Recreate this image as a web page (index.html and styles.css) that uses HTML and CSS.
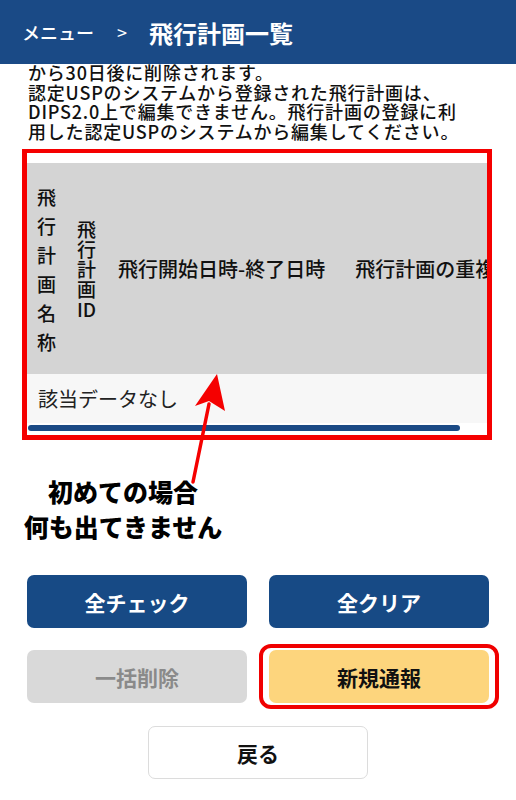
FILE: index.html
```html
<!DOCTYPE html>
<html lang="ja">
<head>
<meta charset="utf-8">
<link rel="stylesheet" href="styles.css">
</head>
<body>
<header class="topbar">
  <span class="crumb">メニュー</span>
  <span class="sep">&gt;</span>
  <span class="title">飛行計画一覧</span>
</header>
<div class="notice">から30日後に削除されます。<br>認定USPのシステムから登録された飛行計画は、<br>DIPS2.0上で編集できません。飛行計画の登録に利<br>用した認定USPのシステムから編集してください。</div>

<div class="tablebox">
  <div class="table">
    <div class="thead">
      <div class="th th-name">飛行計画名称</div>
      <div class="th th-id">飛行計画ID</div>
      <div class="th th-date">飛行開始日時-終了日時</div>
      <div class="th th-dup">飛行計画の重複</div>
    </div>
    <div class="row">該当データなし</div>
    <div class="scrolltrack"><div class="scrollbar"></div></div>
  </div>
</div>

<div class="annotation">初めての場合<br>何も出てきません</div>

<div class="buttons">
  <button class="btn btn-primary">全チェック</button>
  <button class="btn btn-primary">全クリア</button>
  <button class="btn btn-disabled">一括削除</button>
  <button class="btn btn-new">新規通報</button>
</div>
<div class="back-wrap">
  <button class="btn btn-back">戻る</button>
</div>

<svg class="arrow" width="516" height="800" viewBox="0 0 516 800">
  <line x1="209" y1="404" x2="193" y2="482" stroke="#f50000" stroke-width="3.5" stroke-linecap="round"/>
  <polygon points="217,374 195,406 209,401 225,411" fill="#f50000"/>
</svg>
</body>
</html>
```
FILE: styles.css
```css
* { box-sizing: border-box; }
html, body { margin: 0; padding: 0; }
body {
  width: 516px;
  height: 800px;
  overflow: hidden;
  position: relative;
  background: #fff;
  font-family: "Noto Sans CJK JP", "Noto Sans", sans-serif;
  color: #111;
}
.topbar {
  height: 64px;
  background: #1a4a86;
  color: #fff;
  display: flex;
  align-items: center;
  padding: 0 0 0 22px;
  position: relative;
  z-index: 2;
}
.crumb { font-size: 18px; font-weight: 500; }
.sep { font-size: 18px; margin: 0 22px 0 23px; }
.title { font-size: 24px; font-weight: bold; }
.notice {
  margin-top: -1px;
  padding: 0 0 0 28px;
  font-size: 18px;
  line-height: 19.6px;
  white-space: nowrap;
  letter-spacing: 0.8px;
  font-weight: 500;
}
.tablebox {
  margin: 8px 24px 0 22px;
  height: 291px;
  border: 5px solid #f50000;
  border-top-width: 4px;
  overflow: hidden;
}
.table { padding-top: 10px; }
.thead {
  height: 211px;
  background: #d4d4d4;
  display: flex;
  align-items: center;
  white-space: nowrap;
  overflow: hidden;
  font-size: 20px;
  font-weight: 500;
}
.th { padding: 0 10px; flex: none; }
.th-name, .th-id {
  width: 40px;
  white-space: normal;
  word-break: break-all;
  font-size: 19px;
}
.th-name { line-height: 29px; }
.th-id { line-height: 20px; }
.th-date { padding-left: 11px; }
.th-dup { padding-left: 20px; }
.row {
  height: 49px;
  background: #f7f7f7;
  padding-left: 11px;
  display: flex;
  align-items: center;
  font-size: 20px;
  color: #222;
}
.scrolltrack { padding: 2px 0 0 1px; }
.scrollbar {
  width: 432px;
  height: 6px;
  border-radius: 3px;
  background: #1b4a85;
}
.annotation {
  margin-top: 34px;
  width: 246px;
  text-align: center;
  font-size: 25px;
  line-height: 35px;
  font-weight: 900;
  color: #000;
}
.buttons {
  margin-top: 31px;
  padding: 0 27px;
  display: grid;
  grid-template-columns: 1fr 1fr;
  column-gap: 22px;
  row-gap: 22px;
}
.btn {
  font-family: "Noto Sans CJK JP", "Noto Sans", sans-serif;
  height: 53px;
  border: none;
  border-radius: 7px;
  font-size: 21px;
  font-weight: bold;
  padding: 0;
  margin: 0;
}
.btn-primary { background: #174a85; color: #fff; }
.btn-disabled { background: #d9d9d9; color: #8a8a8a; }
.btn-new { background: #fdd57d; color: #111; position: relative; }
.btn-new::after {
  content: "";
  position: absolute;
  left: -10px;
  right: -10px;
  top: -6px;
  bottom: -6px;
  border: 4px solid #f00000;
  border-radius: 12px;
}
.back-wrap {
  margin-top: 23px;
  display: flex;
  justify-content: center;
}
.btn-back {
  width: 220px;
  background: #fff;
  border: 1px solid #dcdcdc;
  color: #111;
}
.arrow {
  position: absolute;
  left: 0;
  top: 0;
  pointer-events: none;
}
```
